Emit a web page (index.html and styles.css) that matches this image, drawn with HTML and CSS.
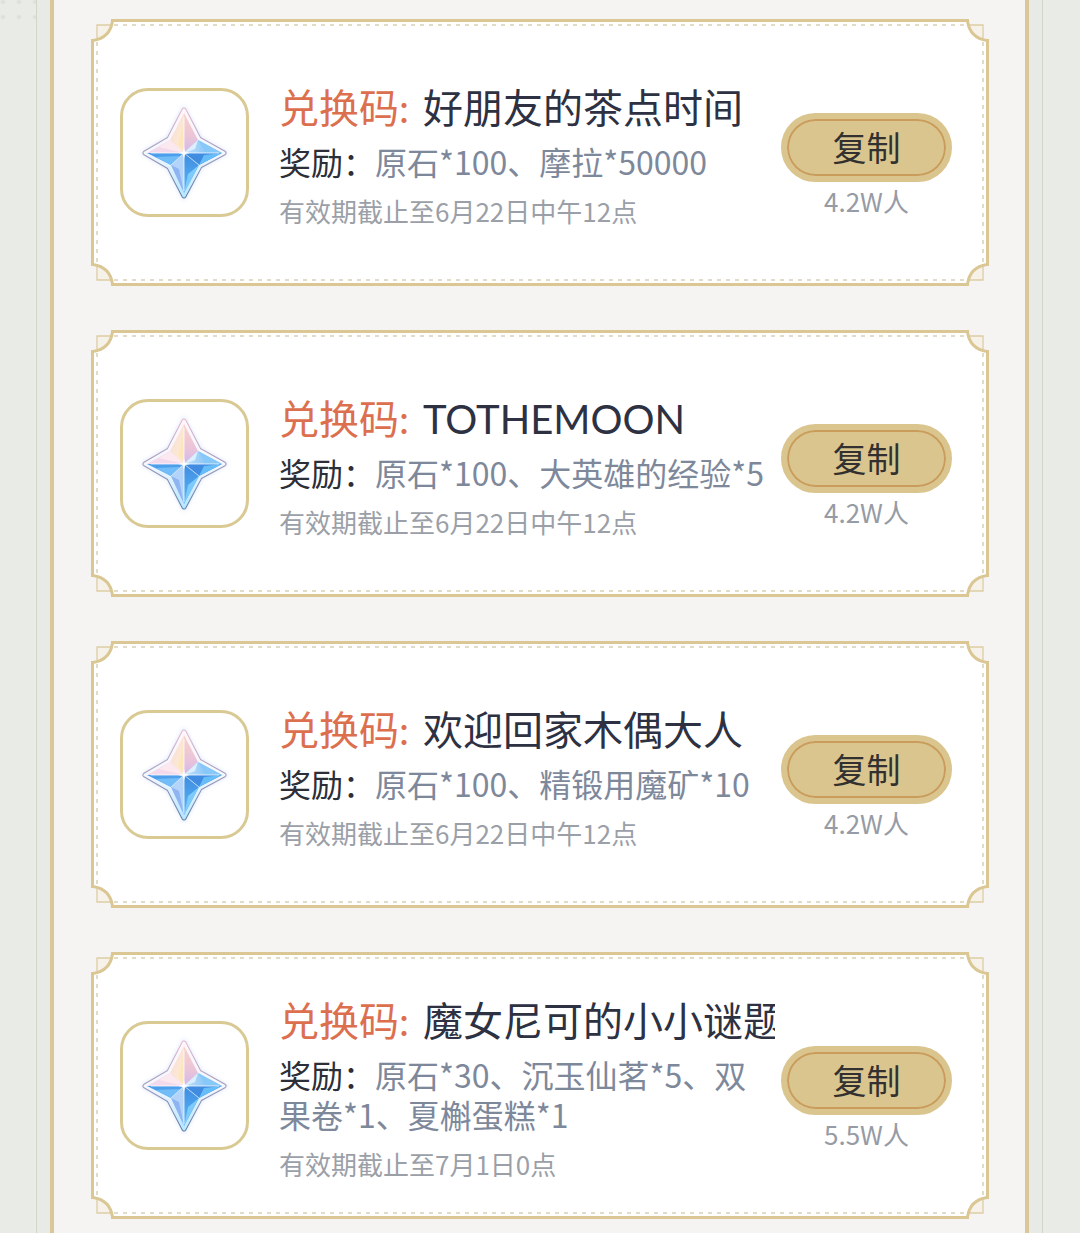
FILE: index.html
```
<!DOCTYPE html>
<html lang="zh-CN">
<head>
    <meta charset="UTF-8">
    <meta name="viewport" content="width=device-width, initial-scale=1">
    <title>兑换码</title>
    <link rel="stylesheet" href="styles.css">
</head>
<body>
    <!-- 公用图形 -->
    <svg class="defs" width="0" height="0" aria-hidden="true">
        <defs>
            <linearGradient id="edge" x1="0" y1="0" x2="0" y2="1">
                <stop offset="0" stop-color="#dfb9d2"/>
                <stop offset="0.45" stop-color="#a99dbb"/>
                <stop offset="1" stop-color="#5f7fa6"/>
            </linearGradient>
            <linearGradient id="rim" x1="0" y1="0" x2="0" y2="1">
                <stop offset="0" stop-color="#fff5fa"/>
                <stop offset="0.5" stop-color="#f3f8ff"/>
                <stop offset="1" stop-color="#b9e6ff"/>
            </linearGradient>
            <linearGradient id="rose" x1="0" y1="0" x2="0" y2="1">
                <stop offset="0" stop-color="#f9d3c8"/>
                <stop offset="0.6" stop-color="#eac4d8"/>
                <stop offset="1" stop-color="#d3b7ea"/>
            </linearGradient>
            <linearGradient id="cream" x1="0" y1="0" x2="1" y2="1">
                <stop offset="0" stop-color="#f8dcd8"/>
                <stop offset="1" stop-color="#fdeed2"/>
            </linearGradient>
            <linearGradient id="sky" x1="0" y1="0" x2="1" y2="0">
                <stop offset="0" stop-color="#c3e3fb"/>
                <stop offset="1" stop-color="#62b1f3"/>
            </linearGradient>
            <linearGradient id="deep" x1="0" y1="0" x2="0" y2="1">
                <stop offset="0" stop-color="#3f8be0"/>
                <stop offset="1" stop-color="#5ab9f8"/>
            </linearGradient>
            <filter id="glow" x="-20%" y="-20%" width="140%" height="140%">
                <feGaussianBlur stdDeviation="2"/>
            </filter>
        </defs>
        <symbol id="gem" viewBox="3 3 123 123">
            <path d="M64 20 80 50 106 65 81 79 64 110 48 80 23 65 48 50Z" fill="#b8cdf4" stroke="#b8cdf4" stroke-width="3" opacity="0.5" filter="url(#glow)"/>
            <path d="M64 22 79 51 104 65 80 78 64 108 49 79 25 65 49 51Z" fill="url(#rim)" stroke="url(#edge)" stroke-width="5" stroke-linejoin="round"/>
            <path d="M64 22 79 51 104 65 80 78 64 108 49 79 25 65 49 51Z" fill="url(#rim)" stroke="url(#rim)" stroke-width="3" stroke-linejoin="round"/>
            <path d="M64 25 50 52 64 65Z" fill="url(#cream)"/>
            <path d="M64 25 78 52 64 65Z" fill="url(#rose)"/>
            <path d="M64 32 58 56 64 65Z" fill="#fde6bc"/>
            <path d="M50 52 27 65 64 65Z" fill="#f3d9ec"/>
            <path d="M50 52 39 59 64 65Z" fill="#fbe9ef"/>
            <path d="M78 52 102 65 64 65Z" fill="url(#sky)"/>
            <path d="M78 52 86 65 102 65Z" fill="#86c8f8"/>
            <path d="M78 52 64 65 75 61Z" fill="#dceffc"/>
            <path d="M27 65 51 77 64 65Z" fill="#4e9feb"/>
            <path d="M36 69 51 77 60 68Z" fill="#72bdf7"/>
            <path d="M102 65 79 77 64 65Z" fill="#3f8ce0"/>
            <path d="M102 65 79 77 84 67Z" fill="#67bdf8"/>
            <path d="M51 77 64 105 64 65Z" fill="#b3d4f8"/>
            <path d="M51 77 64 105 59 81Z" fill="#8fb4f2"/>
            <path d="M79 77 64 105 64 65Z" fill="url(#deep)"/>
            <path d="M79 77 68 86 64 105Z" fill="#7ccbfa"/>
            <path d="M64 29V103M31 65H99" fill="none" stroke="#fff" stroke-width="1" opacity="0.75"/>
            <path d="M51 77 64 65 79 77" fill="none" stroke="#d8eeff" stroke-width="1" opacity="0.7"/>
            <path d="M64 59 65 64 70 65 65 66 64 71 63 66 58 65 63 64Z" fill="#fff"/>
        </symbol>
        <symbol id="corner" viewBox="0 0 23 23">
            <path d="M0 0H23L21 3Q18 18 3 20L0 23Z" fill="#f5f4f2"/>
            <path d="M6 20V6H20Q17 17 6 20Z" fill="#f7f2e9"/>
            <path d="M6 20V6H20" fill="none" stroke="#dccda3" stroke-width="1.3"/>
            <path d="M0 21.5H2Q19 19 21.5 2V0" fill="none" stroke="#dac794" stroke-width="3"/>
        </symbol>
    </svg>

    <div class="page">
        <main class="panel">
            <section class="card">
                <svg class="corner tl"><use href="#corner"/></svg>
                <svg class="corner tr"><use href="#corner"/></svg>
                <svg class="corner bl"><use href="#corner"/></svg>
                <svg class="corner br"><use href="#corner"/></svg>
                <div class="icon"><svg><use href="#gem"/></svg></div>
                <div class="info">
                    <h2 class="code"><span class="label">兑换码:</span>好朋友的茶点时间</h2>
                    <p class="reward"><span class="label">奖励：</span>原石*100、摩拉*50000</p>
                    <p class="expire">有效期截止至6月22日中午12点</p>
                </div>
                <div class="action">
                    <button type="button" class="copy">复制</button>
                    <span class="count">4.2W人</span>
                </div>
            </section>

            <section class="card">
                <svg class="corner tl"><use href="#corner"/></svg>
                <svg class="corner tr"><use href="#corner"/></svg>
                <svg class="corner bl"><use href="#corner"/></svg>
                <svg class="corner br"><use href="#corner"/></svg>
                <div class="icon"><svg><use href="#gem"/></svg></div>
                <div class="info">
                    <h2 class="code"><span class="label">兑换码:</span>TOTHEMOON</h2>
                    <p class="reward"><span class="label">奖励：</span>原石*100、大英雄的经验*5</p>
                    <p class="expire">有效期截止至6月22日中午12点</p>
                </div>
                <div class="action">
                    <button type="button" class="copy">复制</button>
                    <span class="count">4.2W人</span>
                </div>
            </section>

            <section class="card">
                <svg class="corner tl"><use href="#corner"/></svg>
                <svg class="corner tr"><use href="#corner"/></svg>
                <svg class="corner bl"><use href="#corner"/></svg>
                <svg class="corner br"><use href="#corner"/></svg>
                <div class="icon"><svg><use href="#gem"/></svg></div>
                <div class="info">
                    <h2 class="code"><span class="label">兑换码:</span>欢迎回家木偶大人</h2>
                    <p class="reward"><span class="label">奖励：</span>原石*100、精锻用魔矿*10</p>
                    <p class="expire">有效期截止至6月22日中午12点</p>
                </div>
                <div class="action">
                    <button type="button" class="copy">复制</button>
                    <span class="count">4.2W人</span>
                </div>
            </section>

            <section class="card">
                <svg class="corner tl"><use href="#corner"/></svg>
                <svg class="corner tr"><use href="#corner"/></svg>
                <svg class="corner bl"><use href="#corner"/></svg>
                <svg class="corner br"><use href="#corner"/></svg>
                <div class="icon"><svg><use href="#gem"/></svg></div>
                <div class="info">
                    <h2 class="code"><span class="label">兑换码:</span>魔女尼可的小小谜题</h2>
                    <p class="reward"><span class="label">奖励：</span>原石*30、沉玉仙茗*5、双果卷*1、夏槲蛋糕*1</p>
                    <p class="expire">有效期截止至7月1日0点</p>
                </div>
                <div class="action">
                    <button type="button" class="copy">复制</button>
                    <span class="count">5.5W人</span>
                </div>
            </section>
        </main>
    </div>
</body>
</html>
```
FILE: styles.css
```
* {
    box-sizing: border-box;
}

body {
    margin: 0;
    font-family: "Noto Sans CJK SC", sans-serif;
    background-color: #e9ebe6;
    /* 左上角的淡色圆点 */
    background-image: radial-gradient(circle at 3px 2px, #e1e3de 1px, transparent 3px);
    background-size: 16px 15px;
}

h2,
p {
    margin: 0;
    font-weight: normal;
}

.defs {
    position: absolute;
}

/* 底色盖住圆点，只留最上面一小条 */
body {
    background-image:
        linear-gradient(#e9ebe6, #e9ebe6),
        linear-gradient(#e9ebe6, #e9ebe6),
        radial-gradient(circle at 3px 2px, #dddfda 1px, transparent 3px);
    background-size: 100% 100%, 50% 100%, 16px 15px;
    background-position: 0 24px, right top, 0 0;
    background-repeat: no-repeat, no-repeat, repeat;
}

/* 外层细线 */
.page {
    min-height: 100vh;
    margin: 0 37px 0 36px;
    padding: 0 13px;
    background-color: #e8ebe5;
    border: solid #d3d5c9;
    border-width: 0 1px;
    display: flex;
}

.panel {
    flex: 1;
    min-width: 0;
    display: flex;
    flex-direction: column;
    gap: 44px;
    padding: 19px 36px 15px 37px;
    background-color: #f5f4f2;
    border: solid #dac797;
    border-width: 0 4px;
}

.card {
    position: relative;
    display: flex;
    align-items: center;
    min-height: 267px;
    padding: 16px 34px 16px 26px;
    border: 3px solid #dac794;
    background-color: #fff;
}

/* 内侧虚线框 */
.card::before {
    content: "";
    position: absolute;
    inset: 2px;
    background:
        repeating-linear-gradient(90deg, #e0dcc8 0 4px, transparent 4px 9px) top / 100% 2px no-repeat,
        repeating-linear-gradient(90deg, #e0dcc8 0 4px, transparent 4px 9px) bottom / 100% 2px no-repeat,
        repeating-linear-gradient(#e0dcc8 0 4px, transparent 4px 9px) left / 2px 100% no-repeat,
        repeating-linear-gradient(#e0dcc8 0 4px, transparent 4px 9px) right / 2px 100% no-repeat;
}

/* 四角花边 */
.corner {
    position: absolute;
    width: 23px;
    height: 23px;
}

.tl {
    top: -3px;
    left: -3px;
}

.tr {
    top: -3px;
    right: -3px;
    transform: scaleX(-1);
}

.bl {
    bottom: -3px;
    left: -3px;
    transform: scaleY(-1);
}

.br {
    bottom: -3px;
    right: -3px;
    transform: scale(-1);
}

.icon {
    flex: none;
    width: 129px;
    height: 129px;
    margin-right: 30px;
    border: 3px solid #d9ca94;
    border-radius: 28px;
}

.icon svg {
    display: block;
    width: 100%;
    height: 100%;
}

.info {
    flex: 1;
    min-width: 0;
}

.code {
    font-family: Lato, "Noto Sans CJK SC", sans-serif;
    font-size: 40px;
    line-height: 56px;
    color: #2d3142;
    white-space: nowrap;
    overflow: hidden;
}

.code .label {
    margin-right: 14px;
    color: #dc6f4e;
}

.reward {
    margin-top: 5px;
    font-size: 32px;
    line-height: 40px;
    color: #7e889b;
}

.reward .label {
    color: #2c2e38;
}

.expire {
    margin-top: 16px;
    font-size: 26px;
    line-height: 28px;
    color: #9b9fa8;
}

.action {
    flex: none;
    display: flex;
    flex-direction: column;
    align-items: center;
    gap: 4px;
    margin-left: 6px;
    padding-top: 24px;
}

.copy {
    width: 171px;
    height: 69px;
    padding: 0 0 2px;
    font-family: inherit;
    font-size: 34px;
    line-height: 40px;
    color: #32312f;
    background-color: #dbc58e;
    border: 6px solid #dbc58e;
    border-radius: 35px;
    box-shadow: inset 0 0 0 2px #c99c5c;
    cursor: pointer;
}

.count {
    font-size: 26px;
    line-height: 30px;
    color: #969ba5;
}
```
